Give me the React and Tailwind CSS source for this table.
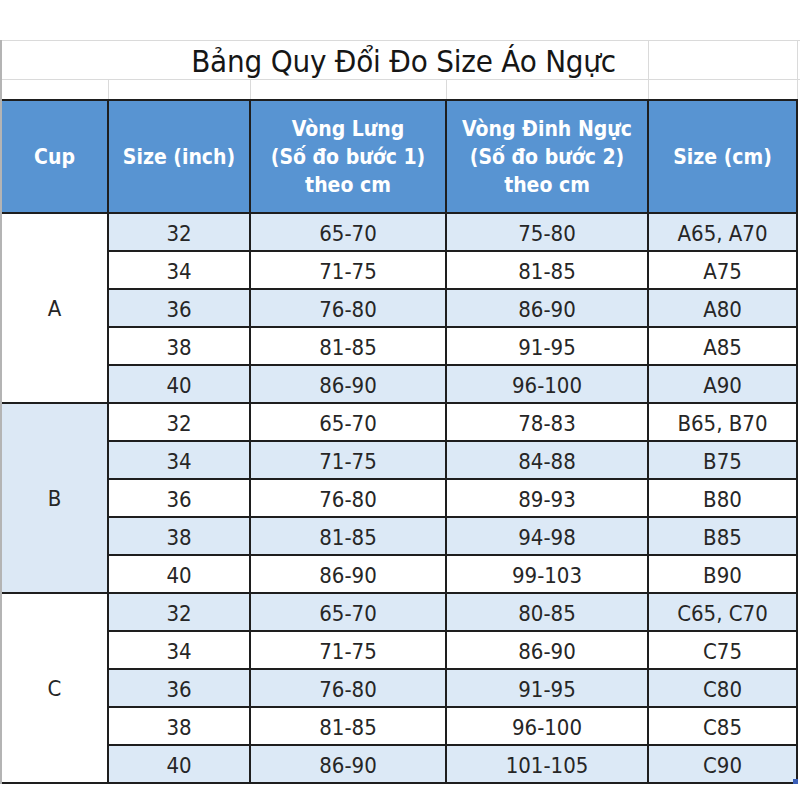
const rows = [
  ['A', [
    ['32', '65-70', '75-80', 'A65, A70'],
    ['34', '71-75', '81-85', 'A75'],
    ['36', '76-80', '86-90', 'A80'],
    ['38', '81-85', '91-95', 'A85'],
    ['40', '86-90', '96-100', 'A90'],
  ]],
  ['B', [
    ['32', '65-70', '78-83', 'B65, B70'],
    ['34', '71-75', '84-88', 'B75'],
    ['36', '76-80', '89-93', 'B80'],
    ['38', '81-85', '94-98', 'B85'],
    ['40', '86-90', '99-103', 'B90'],
  ]],
  ['C', [
    ['32', '65-70', '80-85', 'C65, C70'],
    ['34', '71-75', '86-90', 'C75'],
    ['36', '76-80', '91-95', 'C80'],
    ['38', '81-85', '96-100', 'C85'],
    ['40', '86-90', '101-105', 'C90'],
  ]],
];

const font = { fontFamily: '"DejaVu Sans Condensed", "DejaVu Sans", Tahoma, sans-serif' };

const cell = 'flex items-center justify-center border-r-2 border-b-2 border-[#1e1e1e] text-center';

export default function App() {
  return (
    <div className="w-[800px] h-[800px] bg-white pt-[40px]" style={font}>
      <div className="w-[800px] border-l-2 border-[#b4b4b4]">
        {/* title row */}
        <div className="flex h-[40px] border-t border-b border-[#dadada]">
          <div className="w-[647px] flex items-center justify-end border-r border-[#dadada]">
            <span className="text-[31px] leading-none text-[#161616] mr-[32px] mt-[3px] tracking-[-0.2px]">Bảng Quy Đổi Đo Size Áo Ngực</span>
          </div>
          <div className="w-[149px] border-r border-[#dadada]" />
        </div>
        {/* empty row */}
        <div className="flex h-[19px]">
          <div className="w-[107px] border-r border-[#dadada]" />
          <div className="w-[142px] border-r border-[#dadada]" />
          <div className="w-[196px] border-r border-[#dadada]" />
          <div className="w-[202px] border-r border-[#dadada]" />
          <div className="w-[149px] border-r border-[#dadada]" />
        </div>

        <div className="relative w-[796px] grid grid-cols-[107px_142px_196px_202px_149px] grid-rows-[113px_repeat(15,38px)] border-t-2 border-[#1e1e1e]">
          {/* header */}
          {['Cup', 'Size (inch)', 'Vòng Lưng\n(Số đo bước 1)\ntheo cm', 'Vòng Đinh Ngực\n(Số đo bước 2)\ntheo cm', 'Size (cm)'].map((h, i) => (
            <div key={i} className={`${cell} bg-[#5894d2] text-white font-bold text-[21px] leading-[28px] whitespace-pre-line`}>
              {h}
            </div>
          ))}

          {rows.map(([cup, list], g) => (
            <div key={cup} className="contents">
              <div
                className={`${cell} row-span-5 text-[22px] text-[#262626] ${g === 1 ? 'bg-[#dce8f5]' : 'bg-white'}`}
              >
                {cup}
              </div>
              {list.map((r, i) => {
                const blue = (g * 5 + i) % 2 === 0;
                return r.map((v, j) => (
                  <div
                    key={`${i}-${j}`}
                    style={{ gridColumnStart: j + 2 }}
                    className={`${cell} text-[22px] text-[#262626] pt-[2px] ${blue ? 'bg-[#dce9f6]' : 'bg-white'}`}
                  >
                    {v}
                  </div>
                ));
              })}
            </div>
          ))}

          <div className="absolute right-0 bottom-0 w-[5px] h-[5px] bg-[#3b5fb8]" />
        </div>
      </div>
    </div>
  );
}
